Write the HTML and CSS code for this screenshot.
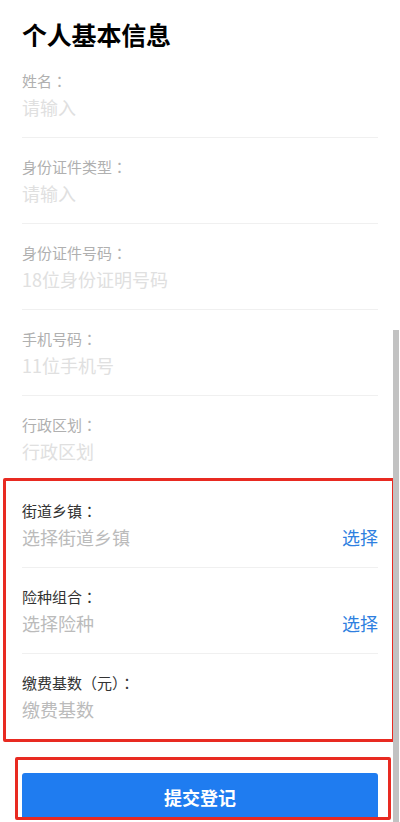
FILE: index.html
```html
<!DOCTYPE html>
<html lang="zh-CN">
<head>
<meta charset="utf-8">
<title>个人基本信息</title>
<link rel="stylesheet" href="styles.css">
</head>
<body>
<div class="page">
  <h1 class="title">个人基本信息</h1>
  <div class="form">
    <div class="row faded">
      <div class="label">姓名<span class="punct" lang="zh-TW">：</span></div>
      <div class="value"><span class="ph">请输入</span></div>
    </div>
    <div class="row faded">
      <div class="label">身份证件类型<span class="punct" lang="zh-TW">：</span></div>
      <div class="value"><span class="ph">请输入</span></div>
    </div>
    <div class="row faded">
      <div class="label">身份证件号码<span class="punct" lang="zh-TW">：</span></div>
      <div class="value"><span class="ph">18位身份证明号码</span></div>
    </div>
    <div class="row faded">
      <div class="label">手机号码<span class="punct" lang="zh-TW">：</span></div>
      <div class="value"><span class="ph">11位手机号</span></div>
    </div>
    <div class="row faded no-line">
      <div class="label">行政区划<span class="punct" lang="zh-TW">：</span></div>
      <div class="value"><span class="ph">行政区划</span></div>
    </div>
    <div class="group">
      <div class="row">
        <div class="label">街道乡镇<span class="punct" lang="zh-TW">：</span></div>
        <div class="value"><span class="ph">选择街道乡镇</span><span class="pick">选择</span></div>
      </div>
      <div class="row">
        <div class="label">险种组合<span class="punct" lang="zh-TW">：</span></div>
        <div class="value"><span class="ph">选择险种</span><span class="pick">选择</span></div>
      </div>
      <div class="row no-line">
        <div class="label">缴费基数（元）<span class="punct" lang="zh-TW">：</span></div>
        <div class="value"><span class="ph">缴费基数</span></div>
      </div>
    </div>
  </div>
  <div class="submit-box">
    <button class="submit" type="button">提交登记</button>
  </div>
  <div class="scroll-thumb"></div>
</div>
</body>
</html>
```

FILE: styles.css
```css
html, body {
  margin: 0;
  padding: 0;
  background: #ffffff;
}
body {
  font-family: "Noto Sans CJK SC", "Noto Sans", sans-serif;
  width: 400px;
  height: 822px;
  overflow: hidden;
}
.page {
  position: relative;
  height: 822px;
  padding: 0 22px;
  box-sizing: border-box;
}
.title {
  margin: 0;
  padding-top: 16px;
  font-size: 25px;
  line-height: 36px;
  font-weight: 700;
  color: #000;
  letter-spacing: -0.2px;
}
.row {
  padding: 19px 0 18px;
  border-bottom: 1px solid #f0f0f0;
}
.row.no-line {
  border-bottom: 1px solid transparent;
}
.group .row.no-line {
  border-bottom: none;
}
.label {
  font-size: 15px;
  line-height: 20px;
  color: #333;
  margin-bottom: 4px;
}
.punct {
  font-family: "Noto Sans CJK TC", "Noto Sans CJK SC", sans-serif;
}
.value {
  display: flex;
  justify-content: space-between;
  align-items: center;
  font-size: 18px;
  line-height: 24px;
}
.ph {
  color: #bbbbbb;
}
.pick {
  color: #2f7fe0;
}
.faded .label {
  color: #b0b0b0;
}
.faded .ph {
  color: #e0e0e0;
}
.group {
  margin: -4px -17px 0 -19px;
  border: 3px solid #e82a21;
  border-radius: 2px;
  padding: 1px 14px 0 16px;
}
.submit-box {
  margin: 15px -13px 0 -7px;
  border: 3px solid #e82a21;
  border-radius: 2px;
  padding: 13px 10px 0 4px;
  height: 44px;
  overflow: hidden;
}
.submit {
  display: block;
  width: 100%;
  height: 46px;
  border: none;
  border-radius: 3px;
  background: #1f7cf0;
  color: #fff;
  font-family: "Noto Sans CJK SC", "Noto Sans", sans-serif;
  font-size: 18px;
  font-weight: 700;
  padding: 2px 0 0;
}
.scroll-thumb {
  position: absolute;
  right: 1px;
  top: 330px;
  width: 6px;
  bottom: 0;
  background: #c2c2c2;
}
```
